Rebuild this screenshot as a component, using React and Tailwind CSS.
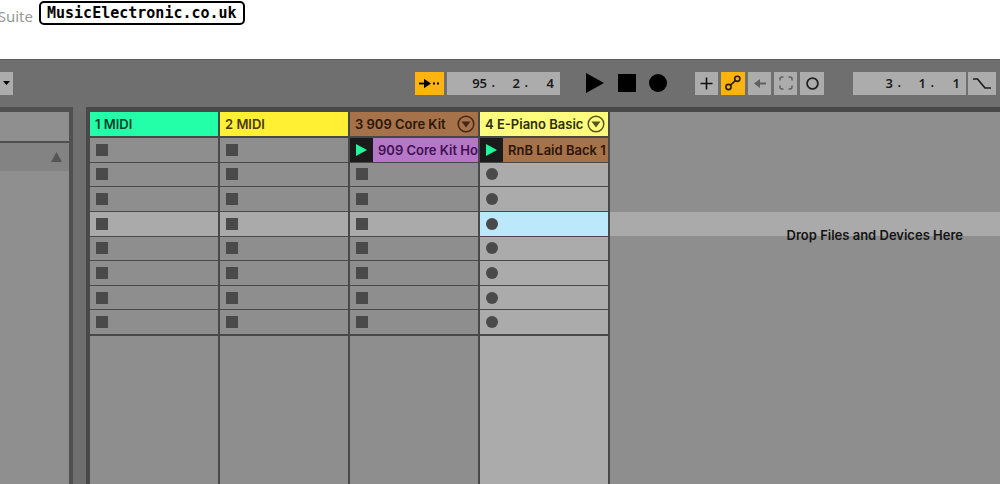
import React from 'react';
import clsx from 'clsx';

const TRACKS = [
    { id: 1, name: '1 MIDI', header: 'bg-[#23ffa8] text-[#06402a]' },
    { id: 2, name: '2 MIDI', header: 'bg-[#fff034] text-[#4a3a08]' },
    {
        id: 3,
        name: '3 909 Core Kit',
        header: 'bg-[#a5724a] text-[#2c1608]',
        foldable: true,
        clip: { name: '909 Core Kit Ho', color: 'bg-[#b677c9] text-[#3d124e]' },
    },
    {
        id: 4,
        name: '4 E-Piano Basic',
        header: 'bg-[#fdfc7c] text-[#2f2c08]',
        foldable: true,
        armed: true,
        clip: { name: 'RnB Laid Back 1', color: 'bg-[#a5724a] text-[#2c1608]' },
    },
];

const SLOTS = [0, 1, 2, 3, 4, 5, 6, 7];
const ACTIVE_SCENE = 3;

function ToolButton({ label, active, className, children }) {
    return (
        <button
            type="button"
            aria-label={label}
            className={clsx('flex h-[23px] shrink-0 items-center justify-center', active ? 'bg-[#ffb30f]' : 'bg-[#acacac]', className)}
        >
            {children}
        </button>
    );
}

function Position({ label, values }) {
    const field = 'h-full bg-transparent p-0 text-right outline-none';
    return (
        <div role="group" aria-label={label} className="flex h-[23px] w-[113px] shrink-0 items-center bg-[#acacac] font-['Noto_Sans',sans-serif] text-[13px] font-semibold text-[#1c1c1c]">
            <input aria-label={`${label} bars`} defaultValue={values[0]} className={clsx(field, 'w-10')} />
            <span className="w-2 text-right">.</span>
            <input aria-label={`${label} beats`} defaultValue={values[1]} className={clsx(field, 'w-[25px]')} />
            <span className="w-2 text-right">.</span>
            <input aria-label={`${label} sixteenths`} defaultValue={values[2]} className={clsx(field, 'w-[26px]')} />
        </div>
    );
}

function Toolbar() {
    return (
        <div className="flex h-12 items-center overflow-hidden border-t border-[#5c5c5c] bg-[#6f6f6f] pb-px">
            <ToolButton label="Quantization menu" className="w-[13px]">
                <svg width="7" height="4" viewBox="0 0 7 4"><path d="M0 0h7L3.500 4z" /></svg>
            </ToolButton>
            <ToolButton label="Follow" active className="ml-[402px] w-[29px]">
                <svg width="21" height="11" viewBox="0 0 21 11">
                    <path d="M0 5.500h6" stroke="#000" strokeWidth="1.800" />
                    <path d="M5 0.800l7 4.700l-7 4.700z" />
                    <path d="M14 4.500h2v2h-2zM18 4.500h2v2h-2z" />
                </svg>
            </ToolButton>
            <div className="ml-[3px] flex shrink-0">
                <Position label="Arrangement position" values={['95', '2', '4']} />
            </div>
            <div className="ml-[26px] flex shrink-0 items-center gap-[13px]">
                <button type="button" aria-label="Play">
                    <svg width="19" height="20" viewBox="0 0 19 20"><path d="M0 0l18 10l-18 10z" /></svg>
                </button>
                <button type="button" aria-label="Stop">
                    <svg width="18" height="18" viewBox="0 0 18 18"><path d="M0 0h18v18h-18z" /></svg>
                </button>
                <button type="button" aria-label="Record">
                    <svg width="18" height="18" viewBox="0 0 18 18"><circle cx="9" cy="9" r="9" /></svg>
                </button>
            </div>
            <div className="ml-7 flex shrink-0 gap-[3px]">
                <ToolButton label="Overdub" className="w-[23px]">
                    <svg width="13" height="13" viewBox="0 0 13 13" stroke="#111" strokeWidth="1.600"><path d="M6.500 0.500v12M0.500 6.500h12" /></svg>
                </ToolButton>
                <ToolButton label="Automation arm" active className="w-6">
                    <svg width="16" height="16" viewBox="0 0 16 16" fill="none" stroke="#2b1d00" strokeWidth="1.600">
                        <circle cx="3.500" cy="12" r="2.600" />
                        <circle cx="12.300" cy="3.800" r="2.600" />
                        <path d="M5.500 10.200l4.800-4.600" />
                    </svg>
                </ToolButton>
                <ToolButton label="Re-enable automation" className="w-[23px]">
                    <svg width="12" height="9" viewBox="0 0 12 9" fill="#5f5f5f"><path d="M0 4.500l6-4.500v3.600h6v1.800h-6v3.600z" /></svg>
                </ToolButton>
                <ToolButton label="Capture MIDI" className="w-[23px]">
                    <svg width="14" height="14" viewBox="0 0 14 14" fill="none" stroke="#5f5f5f" strokeWidth="1.500">
                        <path d="M1 4.500V3q0-2 2-2h1.500M9.500 1H11q2 0 2 2v1.500M13 9.500V11q0 2-2 2H9.500M4.500 13H3q-2 0-2-2V9.500" />
                    </svg>
                </ToolButton>
                <ToolButton label="Session record" className="w-6">
                    <svg width="13" height="13" viewBox="0 0 13 13" fill="none" stroke="#222" strokeWidth="1.800"><circle cx="6.500" cy="6.500" r="5.400" /></svg>
                </ToolButton>
            </div>
            <div className="ml-[29px] flex shrink-0 gap-[2px]">
                <Position label="Loop start" values={['3', '1', '1']} />
                <ToolButton label="Punch in" className="w-7">
                    <svg width="18" height="11" viewBox="0 0 18 11" fill="none" stroke="#1c1c1c" strokeWidth="1.700"><path d="M0 1h4.500l7.500 9h6" /></svg>
                </ToolButton>
            </div>
        </div>
    );
}

function Slot({ track, index }) {
    const scene = index === ACTIVE_SCENE;

    if (index === 0 && track.clip) {
        return (
            <div className="flex min-h-0 border-b border-[#484848]">
                <button type="button" aria-label={`Launch ${track.clip.name}`} className="flex w-[23px] shrink-0 items-center justify-center bg-[#1b1b1b]">
                    <svg width="11" height="12" viewBox="0 0 11 12" fill="#23f59a"><path d="M0 0l11 6l-11 6z" /></svg>
                </button>
                <div className={clsx('min-w-0 flex-1 overflow-hidden pl-[5px] text-[13px] leading-6 font-semibold whitespace-nowrap', track.clip.color)}>
                    {track.clip.name}
                </div>
            </div>
        );
    }

    return (
        <button
            type="button"
            aria-label={`${track.name} slot ${index + 1}`}
            className={clsx(
                'flex min-h-0 items-center border-b border-[#484848] pl-[6px]',
                scene && track.armed && 'bg-[#bce8fb]',
                scene && !track.armed && 'bg-[#aaaaaa]',
            )}
        >
            <span className={clsx('size-3 bg-[#4a4a4a]', track.armed && 'rounded-full')} />
        </button>
    );
}

function Track({ track }) {
    return (
        <div className={clsx('flex w-[130px] shrink-0 flex-col border-r-2 border-[#484848]', track.armed ? 'bg-[#ababab]' : 'bg-[#8e8e8e]')}>
            <div className={clsx('flex h-[26px] shrink-0 items-center justify-between border-b-2 border-[#484848] pr-[3px] pl-[5px] text-[13px] leading-6 font-semibold whitespace-nowrap', track.header)}>
                <span>{track.name}</span>
                {track.foldable && (
                    <button type="button" aria-label={`Unfold ${track.name}`} className="shrink-0 opacity-80">
                        <svg width="18" height="18" viewBox="0 0 18 18">
                            <circle cx="9" cy="9" r="7.800" fill="none" stroke="currentColor" strokeWidth="1.500" />
                            <path d="M4.500 6.500h9l-4.500 6z" fill="currentColor" />
                        </svg>
                    </button>
                )}
            </div>
            <div className="grid h-[197px] shrink-0 grid-cols-1 grid-rows-8">
                {SLOTS.map(i => <Slot key={i} track={track} index={i} />)}
            </div>
            <div className="flex-1 border-t border-[#484848]" />
        </div>
    );
}

export default function App() {
    return (
        <div className="flex min-h-screen flex-col overflow-hidden bg-[#6f6f6f] font-['Inter','Liberation_Sans',sans-serif]">
            <header className="flex h-[59px] items-start bg-white">
                <div className="flex w-[33px] justify-end overflow-hidden pt-1 font-['Noto_Sans',sans-serif] text-[15px] leading-6 text-[#999999]">Suite</div>
                <a href="#home" className="mt-px ml-[6px] flex h-6 items-center rounded-[5px] border-2 border-black px-[6px] font-['DejaVu_Sans_Mono',monospace] text-[15px] font-bold text-black">
                    MusicElectronic.co.uk
                </a>
            </header>
            <Toolbar />
            <main className="flex flex-1">
                <aside className="flex w-[73px] shrink-0 flex-col border-t-[5px] border-r-4 border-[#505050] bg-[#8f8f8f]">
                    <div className="h-[31px] border-b-2 border-[#505050]" />
                    <div className="flex h-7 items-center justify-end bg-[#838383] pr-[7px]">
                        <svg width="11" height="10" viewBox="0 0 11 10" fill="#555"><path d="M5.500 0l5.500 10h-11z" /></svg>
                    </div>
                </aside>
                <section aria-label="Session" className="ml-[13px] flex min-w-0 flex-1 border-t-[5px] border-l-4 border-[#484848]">
                    {TRACKS.map(track => <Track key={track.id} track={track} />)}
                    <div className="min-w-0 flex-1 bg-[#8e8e8e] pt-[100px]">
                        <div className="h-6 bg-[#aaaaaa] pt-[13px] pr-[37px] text-right text-[13px] leading-5 font-semibold whitespace-nowrap text-[#151515]">
                            Drop Files and Devices Here
                        </div>
                    </div>
                </section>
            </main>
        </div>
    );
}
